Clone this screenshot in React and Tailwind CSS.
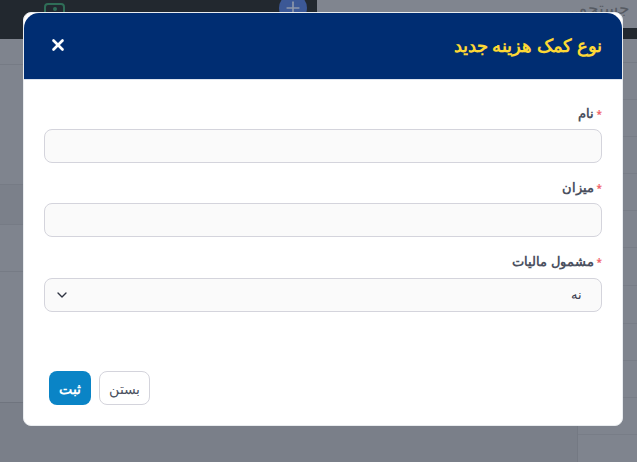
import React from 'react';
import { X, ChevronDown, Plus } from 'lucide-react';

const Field = ({ label, gap = "mb-[5px]", children }) => (
  <div className="flex flex-col">
    <label className={`${gap} h-[21px] text-[13px] leading-[21px] font-bold text-[#4b5160]`}>
      <span className="text-[#f1646c] text-[10px] ml-[3px]">*</span>
      {label}
    </label>
    {children}
  </div>
);

const inputClass = "w-full h-[34px] rounded-[8px] border border-[#d4d4dc] bg-[#fafafa] px-3 outline-none";

const sideRows = [37, 37, 37, 37, 37, 38, 38, 37, 37, 37, 36];

const App = () => {
  return (
    <div dir="rtl" className="relative w-[637px] h-[462px] overflow-hidden bg-[#7f848e] font-['Noto_Sans','Liberation_Sans',sans-serif]">
      {/* page behind the overlay */}
      <div className="flex flex-col h-full" dir="ltr">
        <div className="flex h-[39px] shrink-0">
          <div className="w-[317px] bg-[#22282f] relative">
            <div className="absolute left-[44px] top-[3px] w-[21px] h-[20px] rounded-sm border-2 border-[#2f6d57]">
              <div className="mx-auto mt-[2px] w-[4px] h-[4px] rounded-full bg-[#2f6d57]" />
            </div>
            <div className="absolute left-[279px] top-[-6px] w-[28px] h-[28px] rounded-full bg-[#3c5896] flex items-center justify-center text-[#8d97ab]">
              <Plus className="w-5 h-5" />
            </div>
          </div>
          <div className="flex-1 flex flex-col">
            <div className="h-[28px] bg-[#80858f] text-right pr-[7px] text-[#565a62] text-[17px] leading-[16px]" dir="rtl">جستجو...</div>
            <div className="flex-1 bg-[#22282f]" />
          </div>
        </div>
        <div className="flex flex-1">
          <div className="flex-1 flex flex-col">
            <div className="h-[26px] border-b border-[#767b85]" />
            <div className="h-[120px] border-b border-[#767b85]" />
            <div className="h-[40px] border-b border-[#767b85] bg-[#7b808a]" />
            <div className="h-[47px] border-b border-[#767b85]" />
            <div className="h-[131px] border-b border-[#6f747e]" />
            <div className="flex-1 bg-[#7a7f89]" />
          </div>
          <div className="w-[60px] border-l border-[#747983] flex flex-col">
            <div className="h-[24px] border-b border-[#767b85]" />
            {sideRows.map((h, i) => (
              <div key={i} style={{ height: h }} className="shrink-0 border-b border-[#787d87]" />
            ))}
          </div>
        </div>
      </div>

      {/* modal */}
      <div className="absolute left-[23px] top-[12px] w-[600px] h-[414px] rounded-[8px] bg-white border border-[#e9ecef] flex flex-col">
        <div className="h-[67px] shrink-0 rounded-t-[15px] bg-[#002d72] border-b border-[#dde3ee] flex items-center justify-between pb-[3px] pr-[20px] pl-[25px]">
          <h1 className="text-[18.4px] font-bold text-[#fdd835]">نوع کمک هزینه جدید</h1>
          <X className="w-[18px] h-[18px] text-white" strokeWidth={3.5} />
        </div>
        <div className="flex-1 flex flex-col px-[20px] pt-[23px]">
          <div className="flex flex-col gap-[14px]">
            <Field label="نام"><input className={inputClass} /></Field>
            <Field label="میزان"><input className={inputClass} /></Field>
            <Field label="مشمول مالیات" gap="mb-[6px]">
              <div className={`${inputClass} flex items-center justify-between text-[13px] text-[#3c4150]`}>
                <span className="pr-[7px]">نه</span>
                <ChevronDown className="w-[16px] h-[16px] -ml-[3px] text-[#2f3442]" strokeWidth={2} />
              </div>
            </Field>
          </div>
          <div className="mt-[59px] flex justify-end gap-[8px] pl-[5px]">
            <button className="h-[34px] px-[9px] rounded-[8px] border border-[#d4d4dc] bg-white text-[14px] text-[#4b5160]">بستن</button>
            <button className="h-[34px] w-[42px] rounded-[8px] bg-[#0a84c6] text-[14px] font-bold text-white">ثبت</button>
          </div>
        </div>
      </div>
    </div>
  );
};

export default App;
